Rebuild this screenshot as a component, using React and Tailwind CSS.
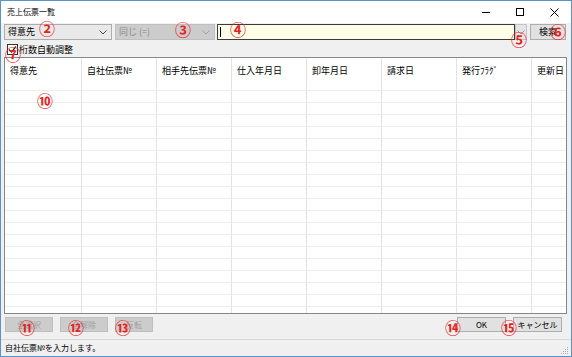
import React from "react";

const cols = ["得意先", "自社伝票№", "相手先伝票№", "仕入年月日", "卸年月日", "請求日", "発行ﾌﾗｸﾞ", "更新日"];
const rows = Array.from({ length: 19 });

function Chevron({ color = "#444" }) {
  return (
    <svg width="8" height="5" viewBox="0 0 8 5">
      <polyline points="0.5,0.5 4,4 7.5,0.5" fill="none" stroke={color} strokeWidth="1" />
    </svg>
  );
}

function Mark({ className, children }) {
  // red circled annotation numbers laid over the dialog
  return (
    <span className={`absolute w-[16px] h-[16px] flex items-center justify-center text-[16px] font-bold leading-none text-[#e8231f] ${className}`}>
      {children}
    </span>
  );
}

export default function App() {
  return (
    <div
      className="relative w-[572px] h-[357px] flex flex-col border border-[#5b93c9] bg-[#f0f0f0] text-[9px] text-black overflow-hidden"
      style={{ fontFamily: '"Noto Sans CJK JP", "Noto Sans", sans-serif' }}
    >
      {/* title bar */}
      <div className="h-[22px] flex items-center bg-white shrink-0">
        <div className="pl-[6px] text-[8px] flex-1">売上伝票一覧</div>
        <div className="w-[34px] h-full flex items-center justify-center">
          <div className="w-[8px] h-[1px] bg-black" />
        </div>
        <div className="w-[34px] h-full flex items-center justify-center">
          <div className="w-[8px] h-[8px] border border-black" />
        </div>
        <div className="w-[34px] h-full flex items-center justify-center">
          <svg width="9" height="9" viewBox="0 0 9 9">
            <path d="M0.5 0.5 L8.5 8.5 M8.5 0.5 L0.5 8.5" stroke="#000" strokeWidth="1" />
          </svg>
        </div>
      </div>

      {/* search row */}
      <div className="mt-[1px] h-[16px] flex items-stretch pl-[3px] shrink-0">
        <div className="w-[108px] flex items-center justify-between bg-[#e9e9e9] border border-[#adadad] pl-[3px] pr-[4px]">
          <span>得意先</span>
          <Chevron />
        </div>
        <div className="ml-[3px] w-[100px] flex items-center justify-between bg-[#cccccc] border border-[#bfbfbf] pl-[3px] pr-[4px] text-[#8a8a8a]">
          <span>同じ (=)</span>
          <Chevron color="#a0a0a0" />
        </div>
        <div className="ml-[2px] w-[298px] flex items-center bg-[#fdfde8] border border-[#3a3a3a] pl-[2px]">
          <div className="w-[1px] h-[10px] bg-black" />
        </div>
        <div className="w-[12px] flex items-center justify-center bg-[#e5e5e5] border border-[#c4c4c4]">
          <Chevron color="#9a9a9a" />
        </div>
        <div className="ml-[3px] w-[36px] flex items-center justify-center bg-[#e1e1e1] border border-[#adadad]">
          検索
        </div>
      </div>

      {/* auto width checkbox */}
      <div className="mt-[3px] h-[13px] flex items-center pl-[6px] shrink-0">
        <div className="w-[11px] h-[11px] border border-[#333] bg-white flex items-center justify-center">
          <svg width="9" height="9" viewBox="0 0 9 9">
            <polyline points="1,4.5 3.5,7 8,1.5" fill="none" stroke="#222" strokeWidth="1.2" />
          </svg>
        </div>
        <span className="ml-[1px]">桁数自動調整</span>
      </div>

      {/* grid */}
      <div className="mt-[1px] ml-[3px] w-[563px] h-[257px] border border-[#828790] bg-white overflow-hidden shrink-0">
        <div className="grid grid-cols-[77px_75px_75px_75px_75px_75px_75px_1fr]">
          {cols.map((c, i) => (
            <div key={c} className={`h-[33px] pt-[6px] pl-[5px] border-b border-[#ededed] ${i < 7 ? "border-r border-r-[#e2e2e2]" : ""}`}>
              {c}
            </div>
          ))}
          {rows.map((_, r) =>
            cols.map((c, i) => (
              <div key={`${r}-${i}`} className={`h-[12px] border-b border-[#ededed] ${i < 7 ? "border-r border-r-[#e2e2e2]" : ""}`} />
            ))
          )}
        </div>
      </div>

      {/* buttons */}
      <div className="mt-[3px] h-[15px] flex items-stretch pl-[4px] pr-[9px] shrink-0 text-[8px]">
        <div className="w-[48px] flex items-center justify-center bg-[#cccccc] border border-[#bfbfbf] text-[#a0a0a0]">全選択</div>
        <div className="ml-[7px] w-[48px] flex items-center justify-center bg-[#cccccc] border border-[#bfbfbf] text-[#a0a0a0]">全解除</div>
        <div className="ml-[7px] w-[38px] flex items-center justify-center bg-[#cccccc] border border-[#bfbfbf] text-[#a0a0a0]">反転</div>
        <div className="flex-1" />
        <div className="w-[49px] flex items-center justify-center bg-[#e1e1e1] border border-[#adadad]">OK</div>
        <div className="ml-[7px] w-[49px] flex items-center justify-center bg-[#e1e1e1] border border-[#adadad]">キャンセル</div>
      </div>

      {/* status bar */}
      <div className="flex-1" />
      <div className="h-[17px] border-t border-[#d7d7d7] flex items-center justify-between pl-[4px] pr-[2px] shrink-0 text-[8px]">
        <span>自社伝票№を入力します。</span>
        <svg width="8" height="8" viewBox="0 0 8 8" className="self-end mb-[1px]">
          <g fill="#b0b0b0">
            <rect x="6" y="0" width="1" height="1" />
            <rect x="4" y="2" width="1" height="1" />
            <rect x="6" y="2" width="1" height="1" />
            <rect x="2" y="4" width="1" height="1" />
            <rect x="4" y="4" width="1" height="1" />
            <rect x="6" y="4" width="1" height="1" />
            <rect x="0" y="6" width="1" height="1" />
            <rect x="2" y="6" width="1" height="1" />
            <rect x="4" y="6" width="1" height="1" />
            <rect x="6" y="6" width="1" height="1" />
          </g>
        </svg>
      </div>

      <Mark className="left-[38px] top-[19px]">②</Mark>
      <Mark className="left-[174px] top-[20px]">③</Mark>
      <Mark className="left-[229px] top-[20px]">④</Mark>
      <Mark className="left-[510px] top-[30px]">⑤</Mark>
      <Mark className="left-[549px] top-[22px]">⑥</Mark>
      <Mark className="left-[4px] top-[45px]">⑦</Mark>
      <Mark className="left-[36px] top-[91px]">⑩</Mark>
      <Mark className="left-[18px] top-[318px]">⑪</Mark>
      <Mark className="left-[67px] top-[318px]">⑫</Mark>
      <Mark className="left-[114px] top-[318px]">⑬</Mark>
      <Mark className="left-[444px] top-[318px]">⑭</Mark>
      <Mark className="left-[500px] top-[318px]">⑮</Mark>
    </div>
  );
}
